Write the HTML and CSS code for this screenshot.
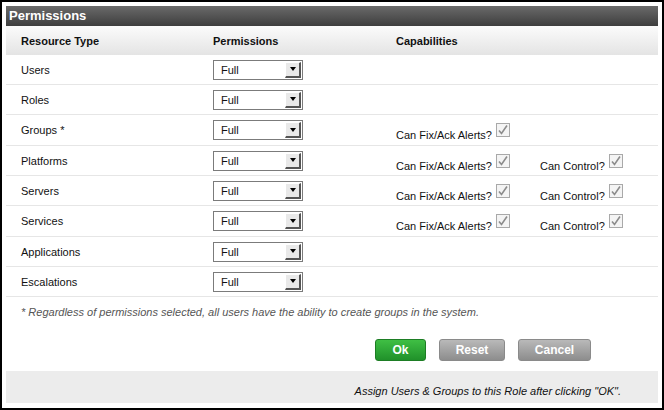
FILE: index.html
```html
<!DOCTYPE html>
<html>
<head>
<meta charset="utf-8">
<link rel="stylesheet" href="styles.css">
</head>
<body>
<div class="frame">
  <div class="titlebar">Permissions</div>
  <div class="row head">
    <div class="c1">Resource Type</div>
    <div class="c2">Permissions</div>
    <div class="c3">Capabilities</div>
  </div>

  <div class="row"><div class="c1">Users</div><div class="c2"><div class="sel"><span class="val">Full</span><span class="btn"><span class="tri"></span></span></div></div><div class="c3"></div></div>
  <div class="row"><div class="c1">Roles</div><div class="c2"><div class="sel"><span class="val">Full</span><span class="btn"><span class="tri"></span></span></div></div><div class="c3"></div></div>
  <div class="row tall"><div class="c1">Groups *</div><div class="c2"><div class="sel"><span class="val">Full</span><span class="btn"><span class="tri"></span></span></div></div>
    <div class="c3"><span class="cap">Can Fix/Ack Alerts? <svg class="cb" width="14" height="14" viewBox="0 0 14 14"><rect x="0.5" y="0.5" width="13" height="13" fill="#f4f4f4" stroke="#a9a9a9"/><path d="M3 7.5 L5.5 10.5 L11 2.5" fill="none" stroke="#8c8c8c" stroke-width="1.6"/></svg></span></div></div>
  <div class="row"><div class="c1">Platforms</div><div class="c2"><div class="sel"><span class="val">Full</span><span class="btn"><span class="tri"></span></span></div></div>
    <div class="c3"><span class="cap">Can Fix/Ack Alerts? <svg class="cb" width="14" height="14" viewBox="0 0 14 14"><rect x="0.5" y="0.5" width="13" height="13" fill="#f4f4f4" stroke="#a9a9a9"/><path d="M3 7.5 L5.5 10.5 L11 2.5" fill="none" stroke="#8c8c8c" stroke-width="1.6"/></svg></span><span class="cap ctl">Can Control? <svg class="cb" width="14" height="14" viewBox="0 0 14 14"><rect x="0.5" y="0.5" width="13" height="13" fill="#f4f4f4" stroke="#a9a9a9"/><path d="M3 7.5 L5.5 10.5 L11 2.5" fill="none" stroke="#8c8c8c" stroke-width="1.6"/></svg></span></div></div>
  <div class="row"><div class="c1">Servers</div><div class="c2"><div class="sel"><span class="val">Full</span><span class="btn"><span class="tri"></span></span></div></div>
    <div class="c3"><span class="cap">Can Fix/Ack Alerts? <svg class="cb" width="14" height="14" viewBox="0 0 14 14"><rect x="0.5" y="0.5" width="13" height="13" fill="#f4f4f4" stroke="#a9a9a9"/><path d="M3 7.5 L5.5 10.5 L11 2.5" fill="none" stroke="#8c8c8c" stroke-width="1.6"/></svg></span><span class="cap ctl">Can Control? <svg class="cb" width="14" height="14" viewBox="0 0 14 14"><rect x="0.5" y="0.5" width="13" height="13" fill="#f4f4f4" stroke="#a9a9a9"/><path d="M3 7.5 L5.5 10.5 L11 2.5" fill="none" stroke="#8c8c8c" stroke-width="1.6"/></svg></span></div></div>
  <div class="row tall"><div class="c1">Services</div><div class="c2"><div class="sel"><span class="val">Full</span><span class="btn"><span class="tri"></span></span></div></div>
    <div class="c3"><span class="cap">Can Fix/Ack Alerts? <svg class="cb" width="14" height="14" viewBox="0 0 14 14"><rect x="0.5" y="0.5" width="13" height="13" fill="#f4f4f4" stroke="#a9a9a9"/><path d="M3 7.5 L5.5 10.5 L11 2.5" fill="none" stroke="#8c8c8c" stroke-width="1.6"/></svg></span><span class="cap ctl">Can Control? <svg class="cb" width="14" height="14" viewBox="0 0 14 14"><rect x="0.5" y="0.5" width="13" height="13" fill="#f4f4f4" stroke="#a9a9a9"/><path d="M3 7.5 L5.5 10.5 L11 2.5" fill="none" stroke="#8c8c8c" stroke-width="1.6"/></svg></span></div></div>
  <div class="row"><div class="c1">Applications</div><div class="c2"><div class="sel"><span class="val">Full</span><span class="btn"><span class="tri"></span></span></div></div><div class="c3"></div></div>
  <div class="row"><div class="c1">Escalations</div><div class="c2"><div class="sel"><span class="val">Full</span><span class="btn"><span class="tri"></span></span></div></div><div class="c3"></div></div>

  <div class="note">* Regardless of permissions selected, all users have the ability to create groups in the system.</div>

  <div class="actions">
    <span class="button ok">Ok</span>
    <span class="button gray reset">Reset</span>
    <span class="button gray cancel">Cancel</span>
  </div>

  <div class="footer">Assign Users &amp; Groups to this Role after clicking "OK".</div>
</div>
</body>
</html>
```

FILE: styles.css
```css
html, body {
  margin: 0;
  padding: 0;
  background: #fff;
}
body {
  font-family: "Liberation Sans", Arial, sans-serif;
  font-size: 11px;
  color: #111;
}
.frame {
  box-sizing: border-box;
  width: 664px;
  height: 410px;
  border: 2px solid #000;
  padding: 4px;
  display: flex;
  flex-direction: column;
}
.titlebar {
  height: 20px;
  line-height: 20px;
  padding-left: 3px;
  color: #fff;
  font-weight: bold;
  font-size: 13px;
  background: linear-gradient(#6a6a6a, #3e3e3e);
}
.row {
  display: flex;
  align-items: center;
  height: 30px;
  box-sizing: border-box;
  border-bottom: 1px solid #e6e6e6;
}
.row.tall {
  height: 31px;
}
.row.head {
  height: 29px;
  border-bottom: none;
  font-weight: bold;
  background: linear-gradient(#fbfbfb, #e4e4e4);
}
.c1 {
  width: 192px;
  padding-left: 15px;
  flex: none;
}
.c2 {
  width: 183px;
  padding-left: 0;
  flex: none;
}
.c3 {
  flex: 1;
  display: flex;
  align-self: stretch;
  align-items: center;
}
.row.head .c3 {
  align-self: auto;
}
.cap {
  display: inline-flex;
  align-items: flex-end;
  padding-top: 4px;
}
.cap .cb {
  margin-left: 4px;
  margin-bottom: 4px;
}
.cap.ctl {
  margin-left: 30px;
}
.sel {
  box-sizing: border-box;
  width: 90px;
  height: 20px;
  border: 1px solid #7b7b7b;
  display: flex;
  align-items: center;
  justify-content: space-between;
  background: #fff;
}
.val {
  padding-left: 7px;
}
.btn {
  box-sizing: border-box;
  width: 16px;
  height: 16px;
  margin-right: 1px;
  background: #e9e9e9;
  border-top: 1px solid #fff;
  border-left: 1px solid #fff;
  border-right: 2px solid #555;
  border-bottom: 2px solid #555;
  display: flex;
  align-items: center;
  justify-content: center;
}
.tri {
  width: 0;
  height: 0;
  border-left: 3px solid transparent;
  border-right: 3px solid transparent;
  border-top: 4px solid #000;
}
.note {
  height: 30px;
  line-height: 30px;
  padding-left: 15px;
  font-style: italic;
  color: #555;
}
.actions {
  display: flex;
  gap: 13px;
  padding-left: 369px;
  padding-top: 12px;
  height: 22px;
}
.button {
  box-sizing: border-box;
  height: 22px;
  line-height: 20px;
  text-align: center;
  color: #fff;
  font-weight: bold;
  font-size: 12px;
  border-radius: 3px;
}
.ok {
  width: 51px;
  background: linear-gradient(#3fbf44, #20912a);
  border: 1px solid #1d7d24;
}
.gray {
  background: linear-gradient(#b9b9b9, #8d8d8d);
  border: 1px solid #8a8a8a;
}
.reset { width: 66px; }
.cancel { width: 73px; }
.footer {
  margin-top: 10px;
  height: 32px;
  background: #ececec;
  display: flex;
  align-items: center;
  justify-content: flex-end;
  padding-right: 37px;
  padding-top: 8px;
  box-sizing: border-box;
  font-style: italic;
}
```
